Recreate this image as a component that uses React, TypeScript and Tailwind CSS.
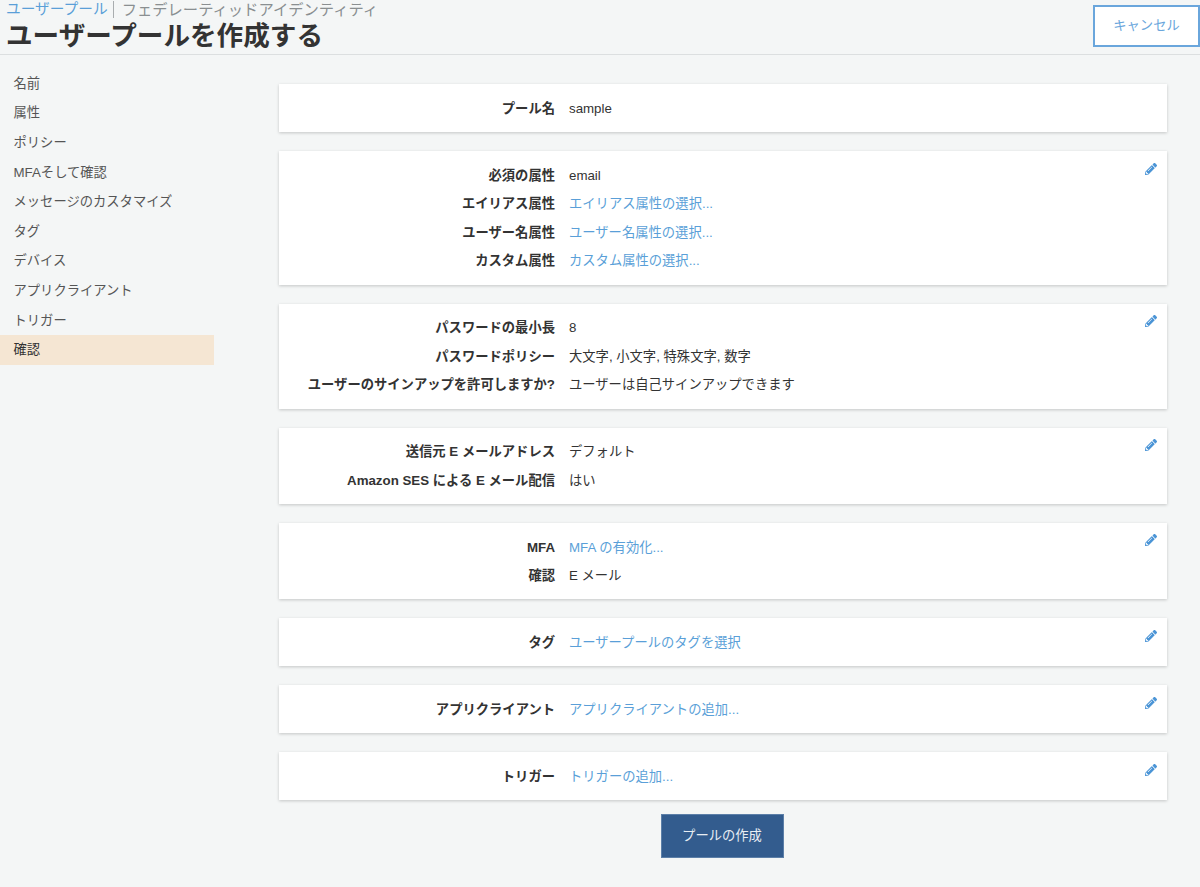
import React from "react";
import { FaPencilAlt } from "react-icons/fa";

type Row = { label: string; value: string; link?: boolean };

const nav = ["名前", "属性", "ポリシー", "MFAそして確認", "メッセージのカスタマイズ", "タグ", "デバイス", "アプリクライアント", "トリガー", "確認"];

const cards: { rows: Row[]; edit: boolean }[] = [
  { edit: false, rows: [{ label: "プール名", value: "sample" }] },
  {
    edit: true,
    rows: [
      { label: "必須の属性", value: "email" },
      { label: "エイリアス属性", value: "エイリアス属性の選択...", link: true },
      { label: "ユーザー名属性", value: "ユーザー名属性の選択...", link: true },
      { label: "カスタム属性", value: "カスタム属性の選択...", link: true },
    ],
  },
  {
    edit: true,
    rows: [
      { label: "パスワードの最小長", value: "8" },
      { label: "パスワードポリシー", value: "大文字, 小文字, 特殊文字, 数字" },
      { label: "ユーザーのサインアップを許可しますか?", value: "ユーザーは自己サインアップできます" },
    ],
  },
  {
    edit: true,
    rows: [
      { label: "送信元 E メールアドレス", value: "デフォルト" },
      { label: "Amazon SES による E メール配信", value: "はい" },
    ],
  },
  {
    edit: true,
    rows: [
      { label: "MFA", value: "MFA の有効化...", link: true },
      { label: "確認", value: "E メール" },
    ],
  },
  { edit: true, rows: [{ label: "タグ", value: "ユーザープールのタグを選択", link: true }] },
  { edit: true, rows: [{ label: "アプリクライアント", value: "アプリクライアントの追加...", link: true }] },
  { edit: true, rows: [{ label: "トリガー", value: "トリガーの追加...", link: true }] },
];

export default function App() {
  return (
    <div className="h-[887px] w-[1200px] overflow-hidden bg-[#f4f6f6] font-['Liberation_Sans','Noto_Sans_CJK_JP',sans-serif] text-[13.3px] text-[#333333]">
      <header className="flex h-[55px] items-start justify-between border-b border-[#dcdfe0] pl-[6px]">
        <div>
          <div className="flex h-[19px] items-center text-[15.3px] leading-[19px] text-[#8a8f91]">
            <span className="text-[14.7px] text-[#5a9fd8]">ユーザープール</span>
            <span className="ml-[5px] mr-[8px] h-[17px] w-px bg-[#a9adaf]" />
            <span>フェデレーティッドアイデンティティ</span>
          </div>
          <h1 className="mt-px text-[26.6px] font-bold leading-[33px] text-[#333333]">ユーザープールを作成する</h1>
        </div>
        <button className="mt-[5px] h-[42px] w-[107px] border-2 border-[#6aa6dc] bg-white text-[13.3px] text-[#6aa6dc]">キャンセル</button>
      </header>
      <div className="flex">
        <nav className="w-[214px] pt-[14px]">
          {nav.map((n, i) => (
            <div
              key={n}
              className={`flex h-[29.6px] items-center pl-[13.5px] ${i === nav.length - 1 ? "bg-[#f5e6d3] text-[#333333]" : "text-[#555555]"}`}
            >
              {n}
            </div>
          ))}
        </nav>
        <main className="ml-[65px] flex w-[888px] flex-col gap-[18.95px] pt-[29.2px]">
          {cards.map((c, i) => (
            <section key={i} className="relative bg-white py-[9.75px] shadow-[0_1px_3px_rgba(0,0,0,0.2)]">
              {c.rows.map((r) => (
                <div key={r.label} className="flex h-[28.5px] items-center pt-[1.5px]">
                  <div className="w-[276px] text-right font-bold text-[#333333]">{r.label}</div>
                  <div className={`ml-[14px] ${r.link ? "text-[#5a9fd8]" : "text-[#333333]"}`}>{r.value}</div>
                </div>
              ))}
              {c.edit && <FaPencilAlt className="absolute right-[10px] top-[11.5px] text-[12px] text-[#4a94d6]" />}
            </section>
          ))}
          <button className="mx-auto -mt-[5px] h-[44px] w-[123px] -translate-x-px border border-[#5c7fa8] bg-[#335c8e] text-[13.3px] text-[#e8edf3]">プールの作成</button>
        </main>
      </div>
    </div>
  );
}
